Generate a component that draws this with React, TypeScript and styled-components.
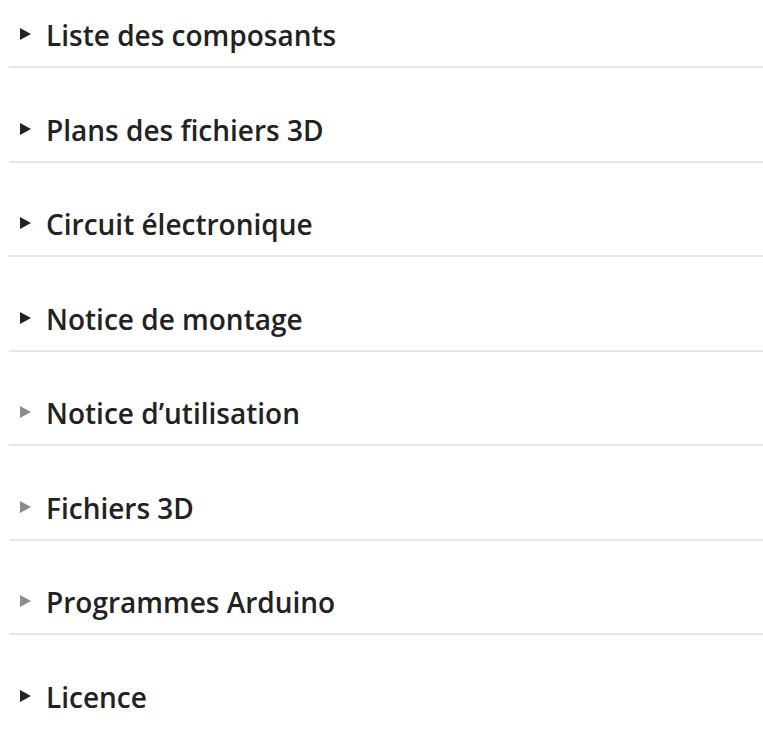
import React from 'react';
import styled, { createGlobalStyle } from 'styled-components';

const GlobalStyle = createGlobalStyle`
  html, body {
    margin: 0;
    padding: 0;
    background: #ffffff;
  }
`;

const List = styled.div`
  display: flex;
  flex-direction: column;
  margin-left: 9px;
  font-family: 'Open Sans', 'Noto Sans', sans-serif;
`;

const Section = styled.details`
  border-bottom: 2px solid #e6e6e6;
  padding: 15px 0 11px;

  & + & {
    margin-top: 26.5px;
  }

  &:last-child {
    border-bottom: none;
  }
`;

const Summary = styled.summary`
  display: flex;
  align-items: center;
  list-style: none;
  cursor: pointer;
  height: 40px;
  font-size: 28px;
  font-weight: 600;
  color: #222222;
  user-select: none;

  &::-webkit-details-marker {
    display: none;
  }
`;

const Arrow = styled.span<{ $muted?: boolean }>`
  width: 0;
  height: 0;
  margin-left: 11px;
  margin-right: 15px;
  margin-top: -2px;
  border-top: 6px solid transparent;
  border-bottom: 6px solid transparent;
  border-left: 11px solid ${(p) => (p.$muted ? '#8c8c8c' : '#222222')};
`;

const sections = [
  { title: 'Liste des composants', muted: false },
  { title: 'Plans des fichiers 3D', muted: false },
  { title: 'Circuit électronique', muted: false },
  { title: 'Notice de montage', muted: false },
  { title: 'Notice d’utilisation', muted: true },
  { title: 'Fichiers 3D', muted: true },
  { title: 'Programmes Arduino', muted: true },
  { title: 'Licence', muted: false },
];

const App = () => {
  return (
    <>
      <GlobalStyle />
      <List>
        {sections.map((s) => (
          <Section key={s.title}>
            <Summary>
              <Arrow $muted={s.muted} />
              {s.title}
            </Summary>
          </Section>
        ))}
      </List>
    </>
  );
};

export default App;
